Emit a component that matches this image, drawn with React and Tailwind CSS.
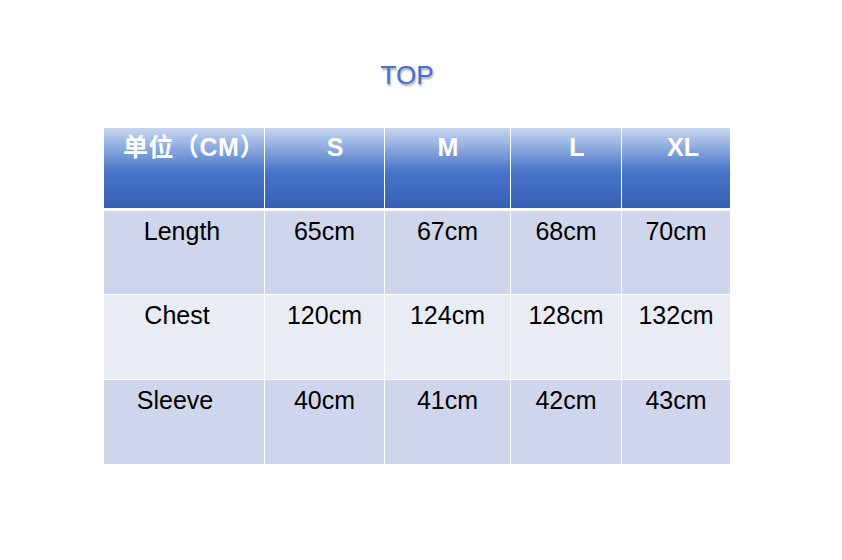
import React from 'react';

const cols = 'grid grid-cols-[160px_119px_125px_110px_108px] gap-px';

const rows = [
  { label: 'Length', pad: 'pr-[4px]', bg: 'bg-[#cfd5ea]', h: 'h-[83px]', values: ['65cm', '67cm', '68cm', '70cm'] },
  { label: 'Chest', pad: 'pr-[14px]', bg: 'bg-[#e9ebf5]', h: 'h-[84px]', values: ['120cm', '124cm', '128cm', '132cm'] },
  { label: 'Sleeve', pad: 'pr-[18px]', bg: 'bg-[#cfd5ea]', h: 'h-[84px]', values: ['40cm', '41cm', '42cm', '43cm'] },
];

const headers = [
  { text: '单位（CM）', pad: 'pl-[19px] tracking-[0.5px]' },
  { text: 'S', pad: 'pl-[21px]' },
  { text: 'M', pad: 'pl-[1px]' },
  { text: 'L', pad: 'pl-[22px]' },
  { text: 'XL', pad: 'pl-[14px]' },
];

export default function App() {
  return (
    <div className="w-[842px] h-[560px] bg-white font-['Liberation_Sans','Noto_Sans_CJK_SC',sans-serif]">
      <div className="pt-[60px] pl-[104px]">
        <div className="w-[606px] text-center text-[26px] leading-[30px] text-[#4a70cf] [text-shadow:1px_2px_2px_rgba(90,90,110,0.55)]">
          TOP
        </div>

        <div className="mt-[38px] w-[626px] bg-white">
          <div className={cols}>
            {headers.map((h) => (
              <div
                key={h.text}
                className={`h-[80px] pt-[5px] text-center text-[25px] leading-[29px] font-bold text-white bg-gradient-to-b from-[#c9d6ef] via-[#4674c8] via-55% to-[#3760b7] ${h.pad}`}
              >
                {h.text}
              </div>
            ))}
          </div>

          <div className="mt-[3px] flex flex-col gap-px">
            {rows.map((r) => (
              <div key={r.label} className={cols}>
                <div className={`${r.h} ${r.bg} ${r.pad} pt-[6px] text-center text-[25px] leading-[29px] text-black`}>
                  {r.label}
                </div>
                {r.values.map((v) => (
                  <div key={v} className={`${r.h} ${r.bg} pt-[6px] text-center text-[25px] leading-[29px] text-black`}>
                    {v}
                  </div>
                ))}
              </div>
            ))}
          </div>
        </div>
      </div>
    </div>
  );
}
